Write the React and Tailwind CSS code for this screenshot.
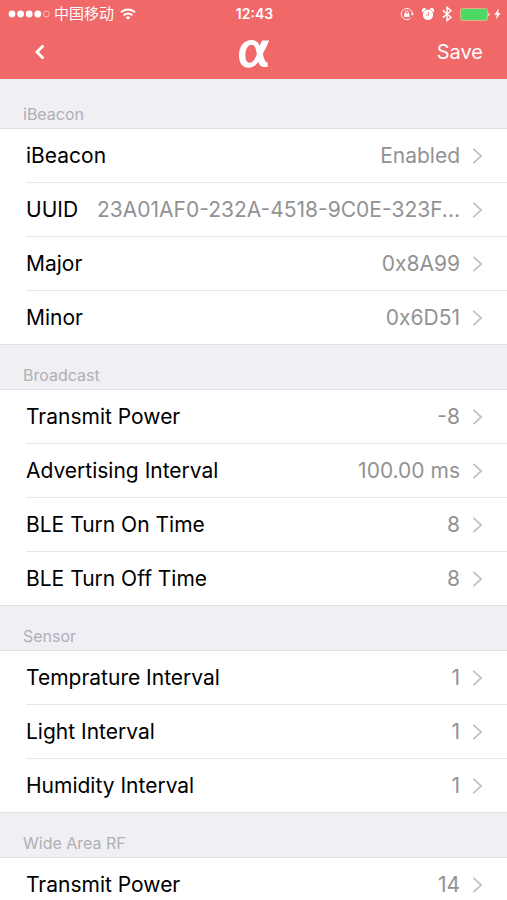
const sections = [
  {
    title: 'iBeacon',
    rows: [
      { label: 'iBeacon', value: 'Enabled' },
      { label: 'UUID', value: '23A01AF0-232A-4518-9C0E-323F...' },
      { label: 'Major', value: '0x8A99' },
      { label: 'Minor', value: '0x6D51' },
    ],
  },
  {
    title: 'Broadcast',
    rows: [
      { label: 'Transmit Power', value: '-8' },
      { label: 'Advertising Interval', value: '100.00 ms' },
      { label: 'BLE Turn On Time', value: '8' },
      { label: 'BLE Turn Off Time', value: '8' },
    ],
  },
  {
    title: 'Sensor',
    rows: [
      { label: 'Temprature Interval', value: '1' },
      { label: 'Light Interval', value: '1' },
      { label: 'Humidity Interval', value: '1' },
    ],
  },
  {
    title: 'Wide Area RF',
    rows: [{ label: 'Transmit Power', value: '14' }],
  },
];

const SignalDots = () => (
  <svg width="42" height="10" viewBox="0 0 42 10" fill="currentColor">
    <circle cx="4" cy="5" r="3.4" />
    <circle cx="12.6" cy="5" r="3.4" />
    <circle cx="21.2" cy="5" r="3.4" />
    <circle cx="29.8" cy="5" r="3.4" />
    <circle cx="38.4" cy="5" r="3" fill="none" stroke="currentColor" strokeWidth="0.8" opacity="0.7" />
  </svg>
);

const WifiIcon = () => (
  <svg width="16" height="12" viewBox="0 0 16 12" fill="none" stroke="currentColor" strokeWidth="2">
    <path d="M1 4.4a10 10 0 0 1 14 0" />
    <path d="M3.6 7.4a6.2 6.2 0 0 1 8.8 0" />
    <path d="M8 11.8 5.7 9.4a3.3 3.3 0 0 1 4.6 0z" fill="currentColor" stroke="none" />
  </svg>
);

const RotationLockIcon = () => (
  <svg width="14" height="14" viewBox="0 0 14 14" fill="none" stroke="currentColor">
    <path d="M12.5 7A5.6 5.6 0 1 0 10.6 11.2" strokeWidth="0.9" />
    <path d="M10.8 6.6h3.2l-1.6 2.1z" fill="currentColor" stroke="none" />
    <rect x="4.2" y="6.2" width="5.2" height="3.8" rx="0.5" fill="currentColor" stroke="none" />
    <path d="M5.3 6.6V5.3a1.5 1.5 0 0 1 3 0v1.3" strokeWidth="1" />
  </svg>
);

const AlarmIcon = () => (
  <svg width="12" height="13" viewBox="0 0 12 13">
    <circle cx="6" cy="6.8" r="5.2" fill="currentColor" />
    <path d="M0.2 4.4A2.4 2.4 0 0 1 4.2 1zM11.8 4.4A2.4 2.4 0 0 0 7.8 1z" fill="currentColor" />
    <path d="M6.4 4v3.2H4.2" fill="none" stroke="#f16868" strokeWidth="0.8" />
  </svg>
);

const BluetoothIcon = () => (
  <svg width="10" height="16" viewBox="0 0 10 16" fill="none" stroke="currentColor" strokeWidth="1.4">
    <path d="M0.8 4.4 9 11.3 5 14.6V1.4l4 3.3-8.2 6.9" />
  </svg>
);

const BatteryIcon = () => (
  <svg width="30" height="13" viewBox="0 0 30 13">
    <rect x="0.5" y="0.6" width="27" height="11.8" rx="1.8" fill="#4cd964" stroke="#e2b48c" strokeWidth="1" />
    <path d="M28.4 4.6v3.8a2 2 0 0 0 0-3.8z" fill="#fbd5d3" />
  </svg>
);

const BoltIcon = () => (
  <svg width="7" height="12" viewBox="0 0 7 12" fill="currentColor">
    <path d="M4.8 0.6 0.3 6.8h2.6L2 11.4l4.7-6.3H4z" />
  </svg>
);

const AlphaLogo = () => (
  <svg width="34" height="30" viewBox="0 0 34 30" fill="currentColor">
    <path
      fillRule="evenodd"
      d="M14.5 1c4 0 6.900 2 8.200 6L25 1.600h7c-1.700 4.800-3.700 9-6.200 13.200 1.300 5.200 2.200 8.400 4.900 8.700v4.400h-3.500c-3.200 0-4.800-1.600-5.900-5.200-2.700 4-5.700 6-9.400 6C5.400 28.700 2 23.800 2 16.400 2 7.400 7 1 14.500 1zM14.600 5.800c-3.800 0-6.200 4.600-6.200 10.400 0 4.800 1.500 7.600 4.400 7.600 3 0 5.200-3.400 7-8.600-.9-5.800-2.100-9.400-5.200-9.400z"
    />
  </svg>
);

const Chevron = () => (
  <svg className="shrink-0" width="11" height="16" viewBox="0 0 11 16" fill="none" stroke="#c2c2c6" strokeWidth="1.8">
    <path d="M1.4 0.8 9.2 8 1.4 15.2" />
  </svg>
);

const StatusBar = () => (
  <div className="grid h-7 grid-cols-[1fr_auto_1fr] items-center pl-2 pr-1.5">
    <div className="flex items-center gap-1">
      <SignalDots />
      <span className="text-[15px] leading-5">中国移动</span>
      <span className="pl-0.5">
        <WifiIcon />
      </span>
    </div>
    <span className="text-sm font-semibold">12:43</span>
    <div className="flex items-center justify-end gap-2">
      <RotationLockIcon />
      <AlarmIcon />
      <BluetoothIcon />
      <div className="flex items-center gap-1">
        <BatteryIcon />
        <BoltIcon />
      </div>
    </div>
  </div>
);

const NavBar = () => (
  <div className="grid h-[51px] grid-cols-3 items-center px-6 pb-1">
    <button type="button" aria-label="Back" className="justify-self-start px-2 py-2">
      <svg width="16" height="16" viewBox="0 0 16 16" fill="none" stroke="currentColor" strokeWidth="2.8">
        <path d="M11.400 1.600 5 8l6.400 6.400" />
      </svg>
    </button>
    <div className="justify-self-center pt-1">
      <AlphaLogo />
    </div>
    <button type="button" className="justify-self-end text-xl">
      Save
    </button>
  </div>
);

const SettingRow = ({ label, value }) => (
  <li className="group pl-[26px]">
    <button
      type="button"
      className="flex h-[54px] w-full items-center border-b border-[#e6e6e8] pr-6 text-left text-[21px] group-last:h-[53px] group-last:border-b-0"
    >
      <span className="shrink-0 text-black">{label}</span>
      <span className="ml-3 min-w-0 flex-1 truncate text-right text-[#929295]">{value}</span>
      <span className="ml-3">
        <Chevron />
      </span>
    </button>
  </li>
);

const Section = ({ title, rows }) => (
  <section className="group/section">
    <h2 className="flex h-[46px] items-end border-y border-[#e0e0e4] bg-[#efeff4] px-[23px] pb-0.5 text-base font-normal text-[#b0b0b5] group-first/section:h-[50px] group-first/section:border-t-0">
      {title}
    </h2>
    <ul className="bg-white">
      {rows.map((row) => (
        <SettingRow key={row.label} {...row} />
      ))}
    </ul>
  </section>
);

export default function App() {
  return (
    <div className="flex h-screen flex-col overflow-hidden bg-white font-['Inter','Noto_Sans_CJK_SC',sans-serif]">
      <header className="shrink-0 bg-[#f16868] text-white">
        <StatusBar />
        <NavBar />
      </header>
      <main className="min-h-0 flex-1 overflow-y-auto [scrollbar-width:none]">
        {sections.map((section) => (
          <Section key={section.title} {...section} />
        ))}
      </main>
    </div>
  );
}
